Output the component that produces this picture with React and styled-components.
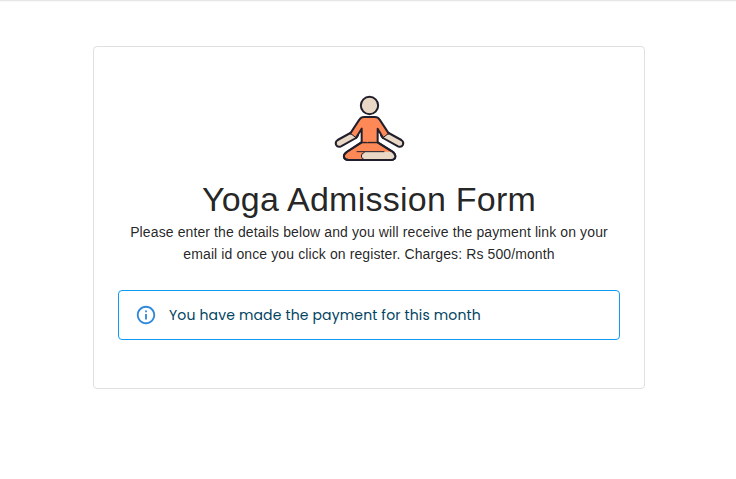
import React from "react";
import styled, { createGlobalStyle } from "styled-components";

const GlobalStyle = createGlobalStyle`
  * { box-sizing: border-box; }
  body {
    margin: 0;
    background: #fff;
    color: rgba(0, 0, 0, 0.87);
    font-family: "Liberation Sans", Arial, sans-serif;
  }
`;

const Page = styled.main`
  display: flex;
  justify-content: center;
  align-items: flex-start;
  min-height: 479px;
  padding: 46px 91px 0 93px;
  box-shadow: inset 0 1px 0 #e6e6e6, inset 0 2px 0 #f9f9f9;
`;

const Card = styled.section`
  display: flex;
  flex-direction: column;
  align-items: center;
  width: 552px;
  height: 343px;
  padding: 43px 24px 0;
  border: 1px solid #e0e0e0;
  border-radius: 4px;
`;

const Illustration = styled.svg`
  display: block;
  width: 80px;
  height: 76px;
  margin-left: 2px;
`;

const Title = styled.h1`
  margin: 12px 0 0;
  font-size: 34px;
  font-weight: 400;
  line-height: 42px;
  letter-spacing: 0.25px;
`;

const Description = styled.p`
  margin: 1px 0 0;
  font-size: 14px;
  line-height: 22px;
  letter-spacing: 0.11px;
  text-align: center;
`;

const Alert = styled.div`
  display: flex;
  align-items: center;
  gap: 12px;
  width: 100%;
  height: 50px;
  margin-top: 25px;
  padding: 0 16px;
  border: 1px solid #0f9bf2;
  border-radius: 4px;
  color: #014361;
`;

const InfoIcon = styled.svg`
  flex: none;
  width: 22px;
  height: 22px;
  fill: #3088db;
`;

const AlertText = styled.span`
  font-family: Poppins, Inter, sans-serif;
  font-size: 14px;
  line-height: 22px;
  letter-spacing: 0.15px;
  white-space: nowrap;
`;

function YogaFigure() {
  return (
    <Illustration viewBox="0 0 240 228" aria-hidden="true">
      <g stroke="#211f2b" strokeWidth="6" strokeLinejoin="round" strokeLinecap="round">
        <circle cx="118.5" cy="46.5" r="26" fill="#ead8c7" />
        <path d="M61 129 L23 150 Q15 155 18 164 Q23 173 33 169 L78 144 Q82 140 84 136 Z" fill="#ead8c7" />
        <path d="M176 129 L214 150 Q222 155 219 164 Q214 173 204 169 L159 144 Q155 140 153 136 Z" fill="#ead8c7" />
        <path d="M94 157 L50 186 Q40 193 42 202 Q44 210 56 210 H184 Q196 209 196 199 Q196 191 186 184 L143 157 Z" fill="#ff8956" />
        <path d="M103 185 H187 Q196 191 196 199 Q196 210 184 210 H103 Q94 207 94 198 Q94 189 103 185 Z" fill="#ead8c7" stroke="none" />
        <path d="M61 130 L88 89 Q93 81 102 81 H135 Q144 81 149 89 L176 130 L159 143 L142 116 V157 H95 V116 L78 143 Z" fill="#ff8956" stroke="none" />
        <path d="M61 130 L88 89 Q93 81 102 81 H135 Q144 81 149 89 L176 130 M95 116 V157 L50 186 Q40 193 42 202 Q44 210 56 210 H184 Q196 209 196 199 Q196 191 186 184 L143 157 V116 L159 143 M78 143 L95 116" fill="none" />
        <path d="M95 157 H109 M115 157 H142 M81 185 H162 M103 187 Q94 190 94 198 Q94 207 103 209 M61 130 L78 143 M176 130 L159 143" fill="none" strokeWidth="3" />
      </g>
    </Illustration>
  );
}

export default function App() {
  return (
    <>
      <GlobalStyle />
      <Page>
        <Card>
          <YogaFigure />
          <Title>Yoga Admission Form</Title>
          <Description>
            Please enter the details below and you will receive the payment link on your
            <br />
            email id once you click on register. Charges: Rs 500/month
          </Description>
          <Alert role="status">
            <InfoIcon viewBox="0 0 24 24" aria-hidden="true">
              <path d="M11 7h2v2h-2V7zm0 4h2v6h-2v-6zm1-9C6.48 2 2 6.48 2 12s4.48 10 10 10 10-4.48 10-10S17.52 2 12 2zm0 18c-4.41 0-8-3.59-8-8s3.59-8 8-8 8 3.59 8 8-3.59 8-8 8z" />
            </InfoIcon>
            <AlertText>You have made the payment for this month</AlertText>
          </Alert>
        </Card>
      </Page>
    </>
  );
}
